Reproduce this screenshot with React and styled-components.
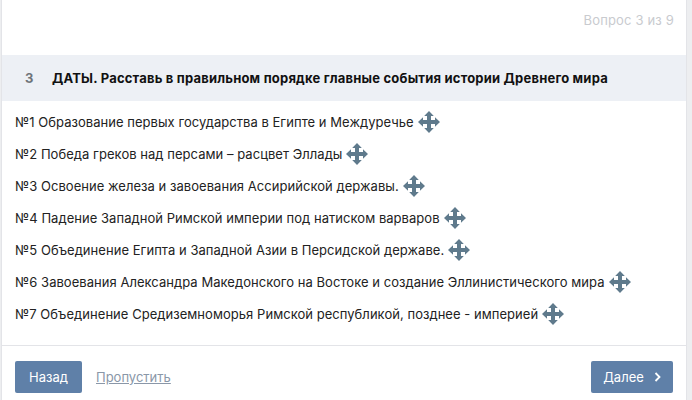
import React from 'react'
import styled, { createGlobalStyle } from 'styled-components'

const GlobalStyle = createGlobalStyle`
  html, body {
    margin: 0;
    padding: 0;
    background: #edeef0;
  }
`

const events = [
  'Образование первых государства в Египте и Междуречье',
  'Победа греков над персами – расцвет Эллады',
  'Освоение железа и завоевания Ассирийской державы.',
  'Падение Западной Римской империи под натиском варваров',
  'Объединение Египта и Западной Азии в Персидской державе.',
  'Завоевания Александра Македонского на Востоке и создание Эллинистического мира',
  'Объединение Средиземноморья Римской республикой, позднее - империей',
]

function MoveIcon() {
  return (
    <Handle viewBox="0 0 22 22">
      <path
        fill="#5f7a8c"
        d="M11 0l4.8 5h-2.8v4h4V6.2L22 11l-5 4.8V13h-4v4h2.8L11 22l-4.8-5H9v-4H5v2.8L0 11l5-4.8V9h4V5H6.2z"
      />
    </Handle>
  )
}

export default function App() {
  return (
    <>
      <GlobalStyle />
      <Card>
        <Progress>Вопрос 3 из 9</Progress>
        <QuestionHead>
          <QuestionNumber>3</QuestionNumber>
          <QuestionTitle>ДАТЫ. Расставь в правильном порядке главные события истории Древнего мира</QuestionTitle>
        </QuestionHead>
        <EventList>
          {events.map((text, i) => (
            <EventRow key={text}>
              <span>№{i + 1} {text}</span>
              <MoveIcon />
            </EventRow>
          ))}
        </EventList>
        <Footer>
          <FooterLeft>
            <Button>Назад</Button>
            <SkipLink href="#">Пропустить</SkipLink>
          </FooterLeft>
          <NextButton>
            Далее
            <svg width="7" height="10" viewBox="0 0 7 10">
              <path d="M1.5 1l4 4-4 4" fill="none" stroke="#fff" strokeWidth="1.8" />
            </svg>
          </NextButton>
        </Footer>
      </Card>
    </>
  )
}

const Card = styled.div`
  box-sizing: border-box;
  width: 686px;
  height: 400px;
  margin-left: 1px;
  background: #fff;
  border-left: 1px solid #e3e4e8;
  border-right: 1px solid #e3e4e8;
  font-family: 'Inter', 'Liberation Sans', sans-serif;
  display: flex;
  flex-direction: column;
`

const Progress = styled.div`
  height: 55px;
  box-sizing: border-box;
  padding: 12px 12px 0 0;
  text-align: right;
  font-size: 13px;
  line-height: 17px;
  letter-spacing: 0.17px;
  color: #c9cbcf;
`

const QuestionHead = styled.div`
  height: 46px;
  background: #edf0f5;
  display: flex;
  align-items: center;
`

const QuestionNumber = styled.div`
  width: 50px;
  box-sizing: border-box;
  padding-left: 23px;
  font-size: 13px;
  font-weight: 700;
  color: #6f7479;
`

const QuestionTitle = styled.div`
  font-size: 13px;
  font-weight: 700;
  letter-spacing: 0.2px;
  color: #111;
`

const EventList = styled.div`
  height: 245px;
  box-sizing: border-box;
  padding: 5px 0 0 13px;
  border-bottom: 1px solid #e3e4e8;
`

const EventRow = styled.div`
  height: 32px;
  display: flex;
  align-items: center;
  gap: 4px;
  font-size: 13px;
  letter-spacing: 0.04px;
  color: #222;
  white-space: nowrap;
`

const Handle = styled.svg`
  width: 22px;
  height: 22px;
  flex: none;
`

const Footer = styled.div`
  flex: 1;
  display: flex;
  justify-content: space-between;
  align-items: flex-start;
  padding: 15px 13px 0 13px;
`

const FooterLeft = styled.div`
  display: flex;
  align-items: center;
  gap: 14px;
`

const Button = styled.button`
  height: 32px;
  width: 67px;
  padding: 0;
  border: 0;
  border-radius: 2px;
  background: #5f80a8;
  color: #fff;
  font-family: inherit;
  font-size: 13px;
`

const NextButton = styled(Button)`
  width: 82px;
  display: flex;
  align-items: center;
  justify-content: center;
  gap: 10px;
`

const SkipLink = styled.a`
  font-size: 13px;
  color: #8a97a8;
  text-decoration: underline;
`
